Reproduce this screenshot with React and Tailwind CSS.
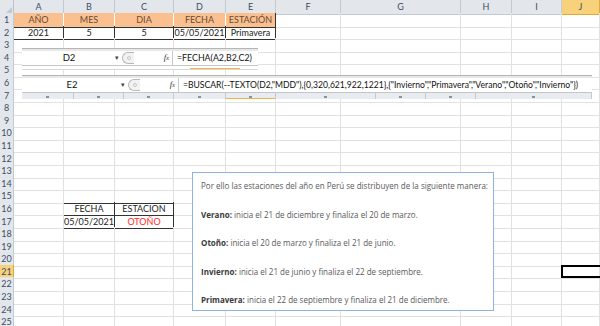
import React from "react";

const COLS = ["A", "B", "C", "D", "E", "F", "G", "H", "I", "J"];
const GRID = "grid grid-cols-[14px_50px_51px_59px_52px_50px_65px_120px_51px_50px_1fr]";

// cell content by row number -> column letter
const CELLS = {
  1: { A: "AÑO", B: "MES", C: "DIA", D: "FECHA", E: "ESTACIÓN" },
  2: { A: "2021", B: "5", C: "5", D: "05/05/2021", E: "Primavera" },
  16: { B: "FECHA", C: "ESTACION" },
  17: { B: "05/05/2021", C: "OTOÑO" },
};

function cellClass(row, col) {
  let c = "border-r border-b border-[#e1e1e1] flex items-center justify-center text-[#222] overflow-hidden whitespace-nowrap";
  if (row === 1 && "ABCDE".includes(col)) {
    c = "border-r border-b flex items-center justify-center bg-[#fac08f] text-[#6b4a33] whitespace-nowrap";
    c += col === "E" ? " border-r-[#333]" : " border-r-white";
    c += " border-b-[#333]";
  }
  if (row === 2 && "ABCDE".includes(col)) {
    c = "border-r border-b border-[#333] flex items-center justify-center text-[#222] whitespace-nowrap";
  }
  if (row === 15 && "BC".includes(col)) c += " border-b-[#333]";
  if ((row === 16 || row === 17) && "BC".includes(col)) c = "border-r border-b border-[#333] flex items-center justify-center text-[#222] whitespace-nowrap";
  if (row === 17 && col === "C") c += " text-[#ff2a2a]";
  return c;
}

function FormulaBar({ name, formula, nameWidth, textSize, children }) {
  return (
    <div className="flex flex-col bg-white">
      <div className="h-[1px] bg-[#b5b5b5]" />
      <div className="h-[2px] bg-[#e8e8e8]" />
      <div className="flex items-center h-[14px] text-[#111]">
        <div className={`${nameWidth} shrink-0 flex items-center justify-center relative text-[9.5px]`}>
          <span className="-ml-[6px]">{name}</span>
          <span className="absolute right-[3px] top-[1px] text-[7px] text-[#444]">▾</span>
        </div>
        <div className="w-[12px] h-[12px] shrink-0 rounded-l-full border border-r-0 border-[#b8b8b8] bg-[#f2f2f2] flex items-center justify-center">
          <span className="w-[4px] h-[4px] rounded-full border border-[#c8c8c8]" />
        </div>
        <div className="w-[38px] shrink-0 flex items-center justify-end pr-[3px]">
          <span className="font-['Liberation_Serif',serif] italic text-[9px] text-[#333]">f<span className="text-[6px]">x</span></span>
        </div>
        <div className={`flex-1 min-w-0 overflow-hidden h-full border-l border-[#c8c8c8] pl-[4px] flex items-center whitespace-nowrap ${textSize}`}>{formula}</div>
      </div>
      <div className="h-[1px] bg-[#c6c6c6]" />
      {children}
    </div>
  );
}

export default function App() {
  const rows = Array.from({ length: 25 }, (_, i) => i + 1);
  return (
    <div className="w-[600px] h-[326px] overflow-hidden bg-white relative font-['Lato',sans-serif] text-[9px]">
      {/* column headers */}
      <div className={`${GRID} h-[13px]`}>
        <div className="bg-[#e3e7ec] border-r border-b border-[#b9c3cf] flex items-end justify-end">
          <span className="w-0 h-0 border-l-[6px] border-l-transparent border-b-[6px] border-b-[#c3c9d1] mr-[1px] mb-[1px]" />
        </div>
        {COLS.map((c) => (
          <div
            key={c}
            className={
              c === "J"
                ? "bg-[#f7d27a] border-r border-b border-[#e0a93a] flex items-center justify-center text-[#3b4d63]"
                : "bg-[#e3e7ec] border-r border-b border-[#c2cad4] flex items-center justify-center text-[#3b4d63]"
            }
          >
            {c}
          </div>
        ))}
      </div>

      {rows.map((r) => (
        <div key={r} className={`${GRID} h-[12.6px]`}>
          <div
            className={
              r === 21
                ? "bg-[#f7d27a] border-r border-b border-[#e0a93a] flex items-center justify-center text-[#3b4d63]"
                : "bg-[#e3e7ec] border-r border-b border-[#c2cad4] flex items-center justify-center text-[#3b4d63]"
            }
          >
            {r}
          </div>
          {COLS.map((c) => (
            <div key={c} className={cellClass(r, c)}>
              {CELLS[r] && CELLS[r][c]}
            </div>
          ))}
        </div>
      ))}

      {/* active cell J21 */}
      <div className="absolute left-[561px] top-[265px] w-[50px] h-[13px] border-2 border-black" />

      {/* formula bar: D2 */}
      <div className="absolute left-[22px] top-[48px] w-[236px]">
        <FormulaBar name="D2" formula="=FECHA(A2,B2,C2)" nameWidth="w-[100px]" textSize="text-[8.8px]">
          <div className="h-[4px] bg-white relative border-b border-[#d8d8d8]">
            <div className="absolute left-[168px] bottom-0 w-[50px] h-[1px] bg-[#f2b441]" />
          </div>
        </FormulaBar>
      </div>

      {/* formula bar: E2 */}
      <div className="absolute left-[22px] top-[75px] w-[570px]">
        <FormulaBar
          name="E2"
          nameWidth="w-[106px]"
          textSize="text-[8.6px]"
          formula={'=BUSCAR(--TEXTO(D2,"MDD"),{0,320,621,922,1221},{"Invierno","Primavera","Verano","Otoño","Invierno"})'}
        >
          <div className="h-[6px] bg-[#e8ebef] grid grid-cols-[52px_50px_50px_52px_50px_100px_50px_50px_1fr] overflow-hidden">
            {["A", "B", "C", "D", "E", "F", "G", "H", "I"].map((c) => (
              <div
                key={c}
                className={
                  c === "E"
                    ? "border-r border-[#c2cad4] border-b-2 border-b-[#f2b441] flex justify-center"
                    : "border-r border-[#c2cad4] flex justify-center"
                }
              >
                <span className="w-[3px] h-[2px] bg-[#8593a3] mt-[3px]" />
              </div>
            ))}
          </div>
        </FormulaBar>
      </div>

      {/* text box */}
      <div className="absolute left-[192px] top-[172px] w-[302px] h-[139px] bg-white border border-[#8db3e2] pl-[8px] pt-[6px] font-['Open_Sans',sans-serif] text-[9px] text-[#595959] flex flex-col gap-[15px] whitespace-nowrap">
        <p className="scale-x-[0.89] origin-left">Por ello las estaciones del año en Perú se distribuyen de la siguiente manera:</p>
        <p className="scale-x-[0.89] origin-left"><b className="text-[#3a3a3a]">Verano:</b> inicia el 21 de diciembre y finaliza el 20 de marzo.</p>
        <p className="scale-x-[0.89] origin-left"><b className="text-[#3a3a3a]">Otoño:</b> inicia el 20 de marzo y finaliza el 21 de junio.</p>
        <p className="scale-x-[0.89] origin-left"><b className="text-[#3a3a3a]">Invierno:</b> inicia el 21 de junio y finaliza el 22 de septiembre.</p>
        <p className="scale-x-[0.89] origin-left"><b className="text-[#3a3a3a]">Primavera:</b> inicia el 22 de septiembre y finaliza el 21 de diciembre.</p>
      </div>
    </div>
  );
}
